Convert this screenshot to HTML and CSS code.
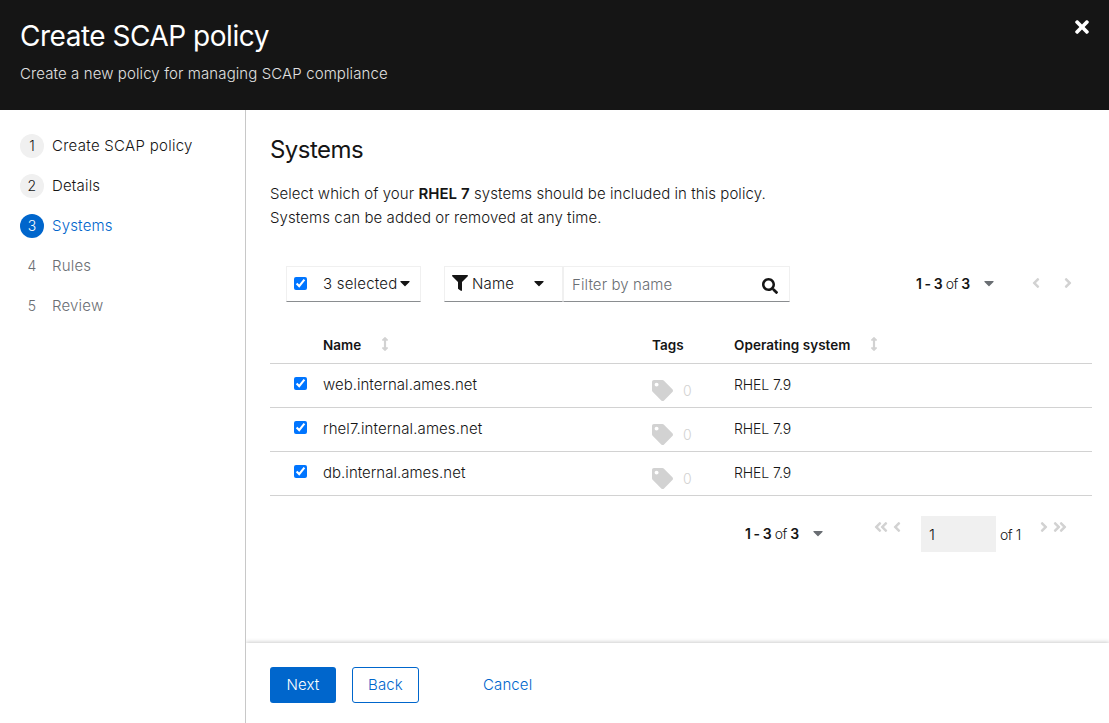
FILE: index.html
```html
<!DOCTYPE html>
<html lang="en">
<head>
<meta charset="utf-8">
<title>Create SCAP policy</title>
<link rel="stylesheet" href="styles.css">
</head>
<body>
<svg class="defs" width="0" height="0">
  <symbol id="caret" viewBox="0 0 320 512"><path d="M31.3 192h257.3c17.8 0 26.7 21.5 14.1 34.1L174.1 354.8c-7.8 7.8-20.5 7.8-28.3 0L17.2 226.1C4.6 213.5 13.5 192 31.3 192z"/></symbol>
  <symbol id="left" viewBox="0 0 256 512"><path d="M31.7 239l136-136c9.400-9.400 24.600-9.400 33.900 0l22.600 22.600c9.400 9.400 9.400 24.600 0 33.900L127.900 256l96.400 96.400c9.400 9.400 9.400 24.600 0 33.900L201.700 409c-9.400 9.400-24.600 9.400-33.900 0l-136-136c-9.500-9.400-9.500-24.600-.1-34z"/></symbol>
  <symbol id="right" viewBox="0 0 256 512"><use href="#left" transform="translate(256 0) scale(-1 1)" width="256" height="512"/></symbol>
  <symbol id="dleft" viewBox="0 0 448 512"><use href="#left" x="0" width="256" height="512"/><use href="#left" x="192" width="256" height="512"/></symbol>
  <symbol id="dright" viewBox="0 0 448 512"><use href="#right" x="0" width="256" height="512"/><use href="#right" x="192" width="256" height="512"/></symbol>
  <symbol id="sort" viewBox="0 0 256 512"><path d="M214.059 377.941H168V134.059h46.059c21.382 0 32.090-25.851 16.971-40.971L144.971 7.029c-9.373-9.373-24.568-9.373-33.941 0L24.971 93.088c-15.119 15.119-4.411 40.971 16.971 40.971H88v243.882H41.941c-21.382 0-32.090 25.851-16.971 40.971l86.059 86.059c9.373 9.373 24.568 9.373 33.941 0l86.059-86.059c15.120-15.119 4.412-40.971-16.970-40.971z"/></symbol>
  <symbol id="tag" viewBox="0 0 512 512"><path d="M0 252.118V48C0 21.490 21.490 0 48 0h204.118a48 48 0 0 1 33.941 14.059l211.882 211.882c18.745 18.745 18.745 49.137 0 67.882L293.823 497.941c-18.745 18.745-49.137 18.745-67.882 0L14.059 286.059A48 48 0 0 1 0 252.118zM112 64c-26.510 0-48 21.490-48 48s21.490 48 48 48 48-21.490 48-48-21.490-48-48-48z"/></symbol>
</svg>
<header class="header">
  <div>
    <h1 class="title">Create SCAP policy</h1>
    <p class="subtitle">Create a new policy for managing SCAP compliance</p>
  </div>
  <button class="close" aria-label="Close"><svg width="14" height="20" viewBox="0 0 352 512"><path d="M242.720 256l100.070-100.070c12.280-12.280 12.280-32.190 0-44.480l-22.240-22.240c-12.280-12.280-32.190-12.280-44.480 0L176 189.280 75.930 89.210c-12.280-12.280-32.190-12.280-44.480 0L9.210 111.450c-12.280 12.280-12.280 32.190 0 44.480L109.280 256 9.210 356.070c-12.280 12.280-12.280 32.190 0 44.480l22.240 22.240c12.280 12.280 32.200 12.280 44.480 0L176 322.720l100.070 100.070c12.280 12.280 32.200 12.280 44.480 0l22.240-22.240c12.280-12.280 12.280-32.190 0-44.480L242.720 256z"/></svg></button>
</header>
<div class="wizard">
  <nav class="nav">
    <div class="step"><span class="num">1</span><span class="label-create">Create SCAP policy</span></div>
    <div class="step"><span class="num">2</span><span>Details</span></div>
    <div class="step current"><span class="num">3</span><span>Systems</span></div>
    <div class="step disabled"><span class="num">4</span><span>Rules</span></div>
    <div class="step disabled"><span class="num">5</span><span>Review</span></div>
  </nav>
  <div class="content">
    <main class="main">
      <h2 class="heading">Systems</h2>
      <p class="intro">Select which of your <b>RHEL 7</b> systems should be included in this policy.<br><span class="intro-second">Systems can be added or removed at any time.</span></p>
      <div class="toolbar">
        <div class="control bulk"><input type="checkbox" checked><span class="selected-label">3 selected</span><svg class="caret" width="10" height="16"><use href="#caret"/></svg></div>
        <div class="control filter"><svg width="16" height="16" viewBox="0 0 512 512"><path d="M487.976 0H24.028C2.710 0-8.047 25.866 7.058 40.971L192 225.941V432c0 7.831 3.821 15.170 10.237 19.662l80 55.980C298.020 518.690 320 507.493 320 487.980V225.941l184.947-184.970C520.021 25.896 509.338 0 487.976 0z"/></svg><span class="filter-label">Name</span><svg class="caret" width="10" height="16"><use href="#caret"/></svg></div>
        <div class="control search"><span class="placeholder">Filter by name</span><svg class="search-icon" width="16" height="16" viewBox="0 0 512 512"><path d="M505 442.700L405.300 343c-4.500-4.500-10.600-7-17-7H372c27.600-35.300 44-79.700 44-128C416 93.100 322.900 0 208 0S0 93.100 0 208s93.100 208 208 208c48.300 0 92.700-16.400 128-44v16.300c0 6.400 2.500 12.500 7 17l99.700 99.700c9.400 9.400 24.600 9.400 33.900 0l28.300-28.300c9.400-9.400 9.400-24.600.1-34zM208 336c-70.700 0-128-57.200-128-128 0-70.700 57.200-128 128-128 70.700 0 128 57.200 128 128 0 70.700-57.200 128-128 128z"/></svg></div>
        <div class="pager pager-top">
          <span class="range"><b>1 - 3</b> of <b>3</b></span>
          <svg class="range-caret" width="10" height="16"><use href="#caret"/></svg>
          <svg class="arrow arrow-prev" width="8" height="16"><use href="#left"/></svg>
          <svg class="arrow arrow-next" width="8" height="16"><use href="#right"/></svg>
        </div>
      </div>
      <div class="table">
        <div class="row head"><span></span><span class="th">Name<svg class="sort sort-name" width="8" height="14"><use href="#sort"/></svg></span><span class="th">Tags</span><span class="th"><span class="os-label">Operating system</span><svg class="sort" width="8" height="14"><use href="#sort"/></svg></span></div>
        <div class="row"><input type="checkbox" checked><span class="host">web.internal.ames.net</span><span class="tags"><svg width="21" height="21"><use href="#tag"/></svg>0</span><span class="os">RHEL 7.9</span></div>
        <div class="row"><input type="checkbox" checked><span class="host host-rhel">rhel7.internal.ames.net</span><span class="tags"><svg width="21" height="21"><use href="#tag"/></svg>0</span><span class="os">RHEL 7.9</span></div>
        <div class="row"><input type="checkbox" checked><span class="host">db.internal.ames.net</span><span class="tags"><svg width="21" height="21"><use href="#tag"/></svg>0</span><span class="os">RHEL 7.9</span></div>
      </div>
      <div class="pager pager-bottom">
        <span class="range"><b>1 - 3</b> of <b>3</b></span>
        <svg class="range-caret" width="10" height="16"><use href="#caret"/></svg>
        <svg class="arrow arrow-first" width="14" height="16"><use href="#dleft"/></svg>
        <svg class="arrow arrow-back" width="8" height="16"><use href="#left"/></svg>
        <span class="page">1</span><span class="total">of 1</span>
        <svg class="arrow arrow-forward" width="8" height="16"><use href="#right"/></svg>
        <svg class="arrow arrow-last" width="14" height="16"><use href="#dright"/></svg>
      </div>
    </main>
    <footer class="footer">
      <button class="btn primary">Next</button>
      <button class="btn secondary">Back</button>
      <button class="btn link">Cancel</button>
    </footer>
  </div>
</div>
</body>
</html>
```
FILE: styles.css
```css
* { box-sizing: border-box; }
body {
  margin: 0;
  height: 723px;
  display: flex;
  flex-direction: column;
  overflow: hidden;
  background: #fff;
  color: #151515;
  font: 350 15px/24px Inter, "Liberation Sans", sans-serif;
  letter-spacing: 0.1px;
}
h1, h2, p { margin: 0; font-weight: 400; }
b { font-weight: 600; }
svg { display: block; flex: none; fill: currentColor; }
.defs { position: absolute; }
input { width: 13px; height: 13px; margin: 0; }
button { font: inherit; letter-spacing: inherit; padding: 0; border: 0; background: none; }

.header {
  flex: none;
  height: 110px;
  padding: 17px 20px 0;
  display: flex;
  justify-content: space-between;
  background: #151515;
  color: #fff;
}
.title { font-size: 28px; line-height: 38px; letter-spacing: -0.48px; }
.subtitle { margin-top: 7px; color: #e0e0e0; font-weight: 300; letter-spacing: 0.1px; }
.close { height: 20px; color: #fff; }

.wizard { flex: 1; display: flex; min-height: 0; }
.nav {
  width: 246px;
  padding: 24px 20px;
  display: flex;
  flex-direction: column;
  gap: 16px;
  border-right: 1px solid #c8c8c8;
}
.step { display: flex; gap: 8px; height: 24px; line-height: 23px; letter-spacing: 0.18px; }
.label-create { letter-spacing: 0.28px; }
.num {
  width: 24px;
  height: 24px;
  border-radius: 50%;
  background: #f0f0f0;
  font-size: 14px;
  line-height: 24px;
  text-align: center;
}
.current { color: #06c; }
.current .num { background: #06c; color: #fff; }
.disabled { color: #6a6e73; }
.disabled .num { background: none; }

.content { flex: 1; display: flex; flex-direction: column; min-width: 0; }
.main { flex: 1; padding: 24px 17px 0 24px; }
.heading { font-size: 24px; line-height: 31px; letter-spacing: -0.55px; }
.intro { margin-top: 17px; letter-spacing: 0.06px; font-weight: 350; }
.intro-second { letter-spacing: 0.08px; }

.toolbar { display: flex; margin: 36px 0 0 16px; height: 36px; }
.control {
  display: flex;
  align-items: center;
  border: 1px solid #f0f0f0;
  border-bottom-color: #8a8d90;
}
.bulk { width: 135px; padding-left: 7px; margin-right: 23px; }
.bulk input { margin-bottom: 1px; }
.bulk .caret { margin-bottom: 2px; }
.selected-label { width: 74px; margin: 0 3px 0 16px; letter-spacing: 0.2px; white-space: nowrap; }
.filter { width: 119px; padding-left: 7px; }
.filter svg { margin-bottom: 2px; }
.filter-label { width: 62px; margin: 0 0 0 4px; letter-spacing: 0.2px; }
.search { width: 227px; padding: 2px 11px 0 8px; justify-content: space-between; }
.search-icon { margin-top: 1px; }
.placeholder { color: #6a6e73; margin-bottom: 1px; }

.pager { display: flex; font-size: 14px; line-height: 21px; letter-spacing: -0.45px; }
.range { width: 55px; white-space: nowrap; }
.range-caret { color: #6a6e73; margin-left: 13px; }
.arrow { color: #d2d2d2; }
.pager-top { margin-left: 126px; padding-top: 7px; }
.pager-top .range-caret { margin: 2px 0 0 13px; }
.arrow-prev { margin: 2px 0 0 38px; }
.arrow-next { margin: 2px 0 0 24px; }

.table { margin-top: 22px; }
.row {
  display: grid;
  grid-template-columns: 53px 329px 82px 1fr;
  height: 44px;
  border-bottom: 1px solid #d2d2d2;
}
.head { height: 40px; }
.row input { margin: 13px 0 0 24px; }
.th { display: flex; padding-top: 11px; font-size: 13.5px; line-height: 21px; font-weight: 600; letter-spacing: 0.05px; }
.sort { color: #d2d2d2; margin: 2px 0 0 19px; }
.sort-name { margin-left: 20px; }
.host { padding-top: 9px; letter-spacing: 0.02px; }
.host-rhel { letter-spacing: 0.1px; }
.tags { display: flex; gap: 10px; padding-top: 16px; font-size: 14px; line-height: 21px; color: #d2d2d2; }
.os { padding-top: 10px; font-size: 14px; line-height: 21px; letter-spacing: -0.08px; }

.pager-bottom { margin: 20px 0 0 475px; height: 36px; }
.pager-bottom .range { padding-top: 7px; }
.pager-bottom .range-caret { margin-top: 9px; }
.arrow-first { margin: 3px 0 0 51px; }
.arrow-back { margin: 3px 0 0 5px; }
.page { width: 75px; margin-left: 20px; padding: 8px; background: #f0f0f0; font-size: 15px; }
.total { width: 22px; margin: 8px 0 0 4px; white-space: nowrap; }
.arrow-forward { margin: 3px 0 0 18px; }
.arrow-last { margin: 3px 0 0 5px; }

.footer {
  flex: none;
  height: 80px;
  padding: 24px;
  display: flex;
  align-items: flex-start;
  box-shadow: 0 -1px 4px rgba(3, 3, 3, 0.2);
  clip-path: inset(-6px 0 0 0);
}
.btn { height: 36px; padding-bottom: 1px; border-radius: 3px; color: #06c; letter-spacing: 0.12px; }
.primary { width: 66px; background: #06c; color: #fff; }
.secondary { width: 67px; margin-left: 16px; border: 1px solid #06c; }
.link { margin-left: 64px; }
```
